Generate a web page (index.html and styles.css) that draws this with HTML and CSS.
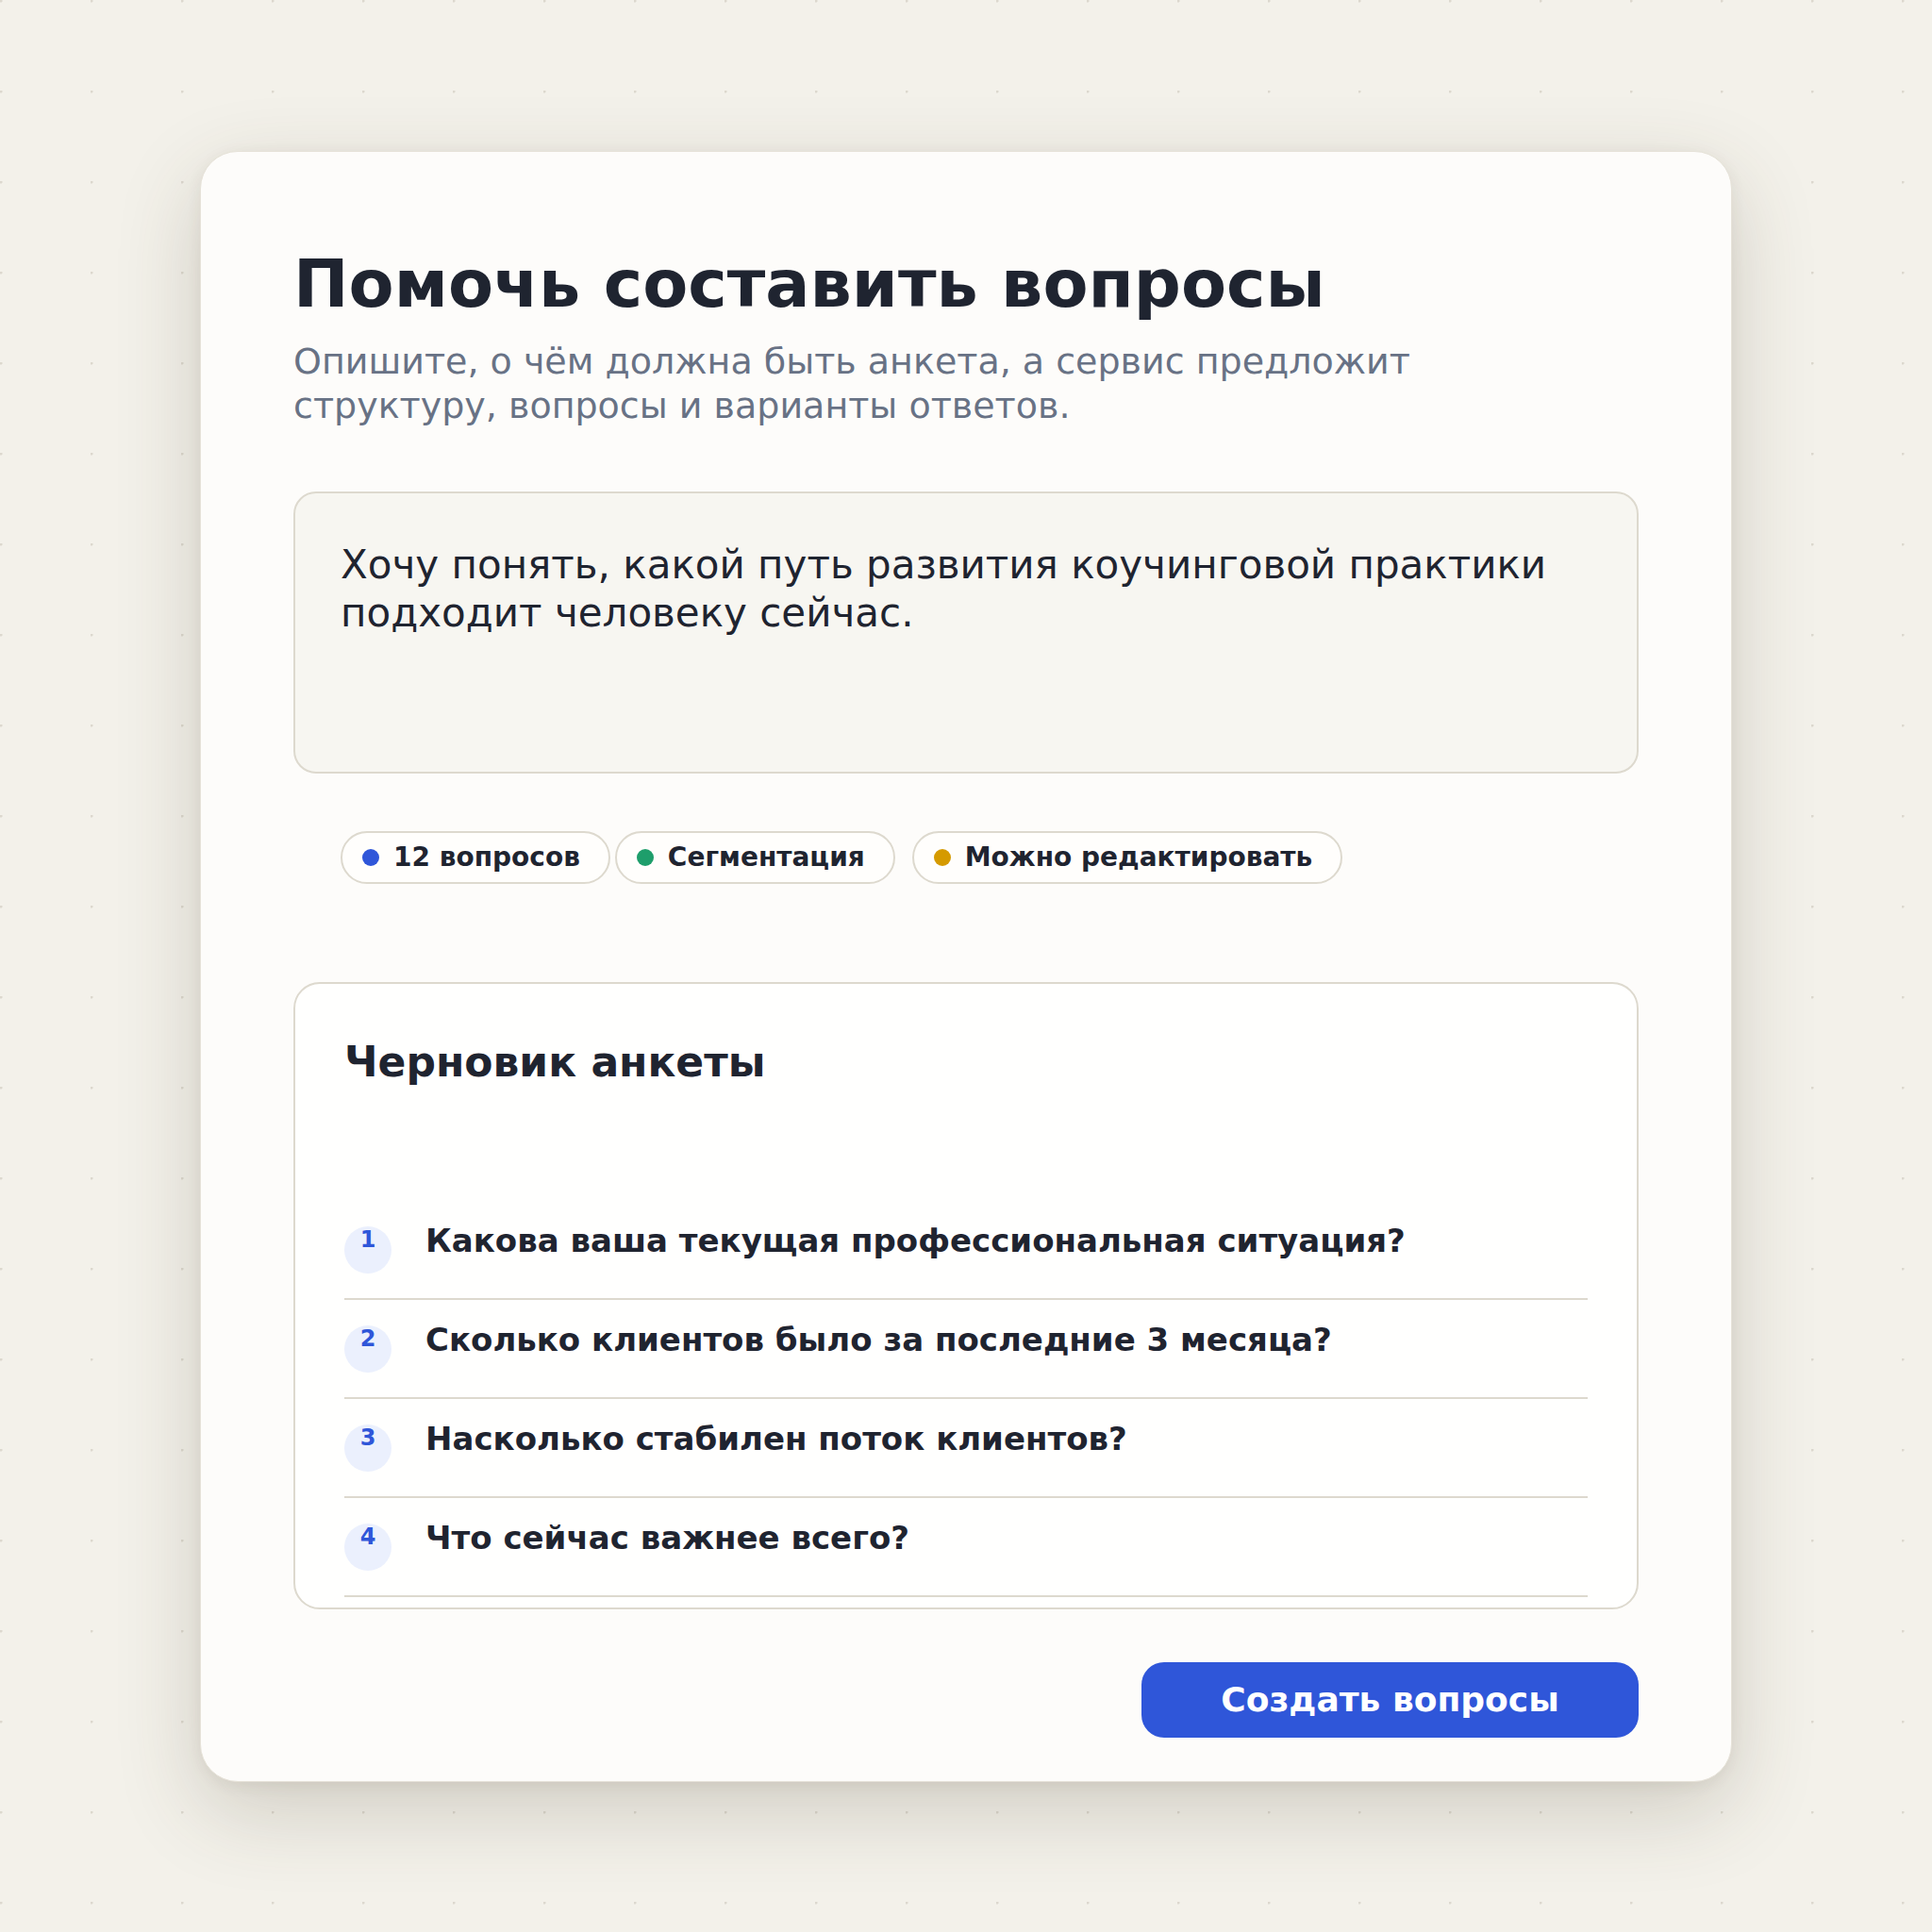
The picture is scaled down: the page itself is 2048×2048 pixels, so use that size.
FILE: index.html
```html
<!DOCTYPE html>
<html lang="ru">
<head>
    <meta charset="UTF-8">
    <meta name="viewport" content="width=device-width, initial-scale=1.0">
    <title>Помочь составить вопросы</title>
    <link rel="stylesheet" href="styles.css">
</head>
<body>
    <main class="card">
        <h1 class="title">Помочь составить вопросы</h1>
        <p class="lead">Опишите, о чём должна быть анкета, а сервис предложит структуру, вопросы и варианты ответов.</p>

        <textarea class="prompt" id="prompt" readonly>Хочу понять, какой путь развития коучинговой практики подходит человеку сейчас.</textarea>

        <div class="tags">
            <span class="tag"><span class="dot dot-blue"></span>12 вопросов</span>
            <span class="tag"><span class="dot dot-green"></span>Сегментация</span>
            <span class="tag tag-wide"><span class="dot dot-amber"></span>Можно редактировать</span>
        </div>

        <section class="draft">
            <h2>Черновик анкеты</h2>
            <ol class="questions">
                <li class="question"><span class="num">1</span><span class="q-text">Какова ваша текущая профессиональная ситуация?</span></li>
                <li class="question"><span class="num">2</span><span class="q-text">Сколько клиентов было за последние 3 месяца?</span></li>
                <li class="question"><span class="num">3</span><span class="q-text">Насколько стабилен поток клиентов?</span></li>
                <li class="question"><span class="num">4</span><span class="q-text">Что сейчас важнее всего?</span></li>
            </ol>
        </section>

        <div class="actions">
            <button type="button" class="primary">Создать вопросы</button>
        </div>
    </main>
</body>
</html>
```

FILE: styles.css
```css
:root {
    --ink: #1f2430;
    --muted: #687285;
    --line: #ddd9ce;
    --blue: #2f56d9;
    --green: #1e9e6b;
    --amber: #d59a00;
}

* {
    margin: 0;
    padding: 0;
    box-sizing: border-box;
}

body {
    font-family: "DejaVu Sans", Verdana, sans-serif;
    color: var(--ink);
    background-color: #f3f1ea;
    background-image: radial-gradient(circle at 1px 1px, #dcd8ce 1.3px, transparent 1.8px);
    background-size: 96px 96px;
    min-height: 100vh;
    display: flex;
    align-items: center;
    justify-content: center;
}

.card {
    width: 1624px;
    background: #fdfcfa;
    border: 1px solid #e6e2d8;
    border-radius: 40px;
    padding: 98px 98px 46px;
    box-shadow: 0 30px 90px rgba(70, 60, 40, 0.2), 0 4px 16px rgba(70, 60, 40, 0.07);
}

.title {
    font-size: 70px;
    line-height: 84px;
    font-weight: 700;
}

.lead {
    margin-top: 17px;
    max-width: 1220px;
    font-size: 38px;
    line-height: 47px;
    color: var(--muted);
}

.prompt {
    display: block;
    width: 100%;
    height: 299px;
    margin-top: 67px;
    padding: 50px 48px;
    border: 2px solid var(--line);
    border-radius: 24px;
    background: #f7f6f1;
    font-family: inherit;
    font-size: 42px;
    line-height: 51px;
    color: var(--ink);
    resize: none;
    outline: none;
    overflow: hidden;
}

.tags {
    display: flex;
    gap: 5px;
    margin-top: 61px;
    padding-left: 50px;
}

.tag {
    display: inline-flex;
    align-items: center;
    gap: 15px;
    height: 56px;
    padding: 0 30px 0 21px;
    border: 2px solid var(--line);
    border-radius: 28px;
    background: #fffefc;
    font-size: 28px;
    font-weight: 700;
    white-space: nowrap;
}

.tag-wide {
    margin-left: 13px;
}

.dot {
    width: 18px;
    height: 18px;
    border-radius: 50%;
    flex-shrink: 0;
}

.dot-blue { background: var(--blue); }
.dot-green { background: var(--green); }
.dot-amber { background: var(--amber); }

.draft {
    margin-top: 104px;
    border: 2px solid var(--line);
    border-radius: 28px;
    background: #fffffe;
    padding: 56px 52px 11px;
}

.draft h2 {
    font-size: 44px;
    line-height: 53px;
    font-weight: 700;
    margin-bottom: 121px;
}

.questions {
    list-style: none;
}

.question {
    display: flex;
    align-items: flex-start;
    gap: 36px;
    padding: 27px 0 26px;
    border-bottom: 2px solid var(--line);
}

.num {
    width: 50px;
    height: 50px;
    flex-shrink: 0;
    border-radius: 50%;
    background: #ebf0fd;
    color: var(--blue);
    font-size: 24px;
    font-weight: 700;
    text-align: center;
}

.q-text {
    font-size: 34px;
    line-height: 30px;
    font-weight: 700;
}

.actions {
    display: flex;
    justify-content: flex-end;
    margin-top: 56px;
}

.primary {
    width: 527px;
    height: 80px;
    border: none;
    border-radius: 24px;
    background: var(--blue);
    color: #ffffff;
    font-family: inherit;
    font-size: 36px;
    font-weight: 700;
    cursor: pointer;
}

.primary:hover {
    background: #2649c4;
}
```
